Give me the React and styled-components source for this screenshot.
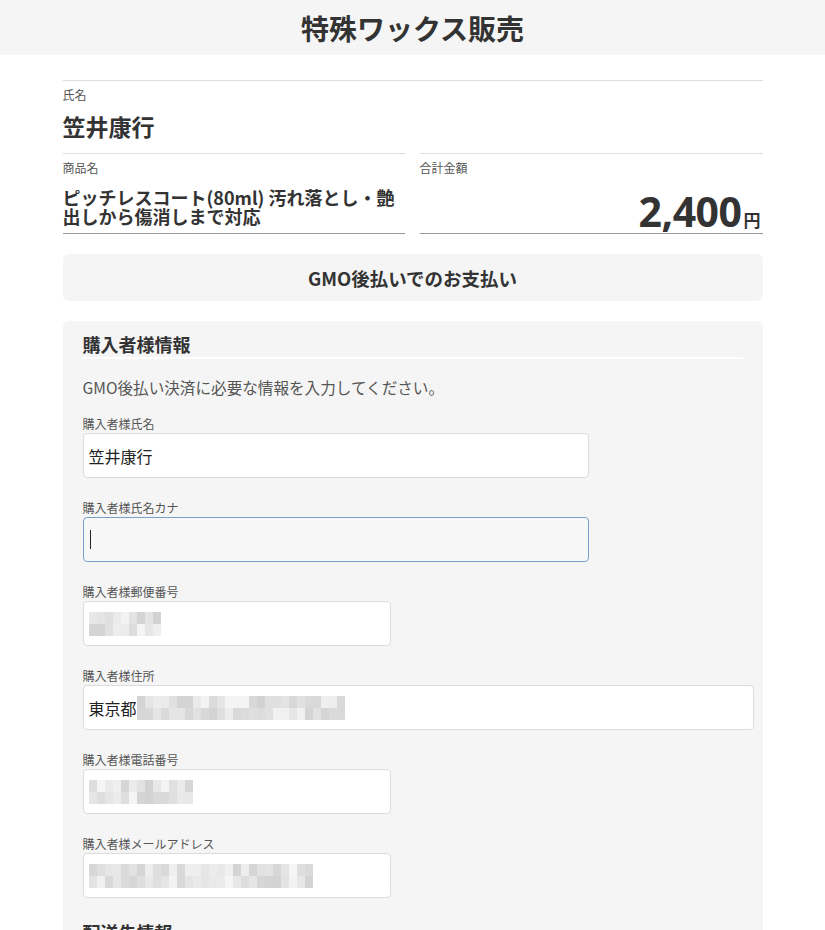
import React from 'react';
import styled, { createGlobalStyle } from 'styled-components';

const GlobalStyle = createGlobalStyle`
  body {
    margin: 0;
    background: #fff;
    color: #333;
    font-family: "Noto Sans CJK JP", "Noto Sans", sans-serif;
  }
`;

const Header = styled.header`
  height: 55px;
  background: #f5f5f5;
  display: flex;
  align-items: center;
  justify-content: center;
`;

const Title = styled.h1`
  margin: 0;
  font-size: 28px;
  font-weight: 700;
  color: #333;
`;

const Main = styled.main`
  width: 700px;
  margin: 0 auto;
  padding-top: 25px;
`;

const InfoBlock = styled.div`
  border-top: 1px solid #ddd;
  padding-top: 5px;
  display: flex;
  flex-direction: column;
`;

const InfoLabel = styled.div`
  font-size: 12px;
  line-height: 18px;
  color: #555;
`;

const BuyerName = styled.div`
  font-size: 23px;
  font-weight: 700;
  line-height: 32px;
  margin-top: 6px;
  margin-bottom: 11px;
`;

const InfoRow = styled.div`
  display: grid;
  grid-template-columns: 342px 343px;
  column-gap: 15px;
`;

const InfoCell = styled(InfoBlock)`
  border-bottom: 1px solid #999;
  padding-bottom: 7px;
`;

const ProductName = styled.div`
  font-size: 18px;
  font-weight: 700;
  line-height: 19px;
  margin-top: 11px;
`;

const Amount = styled.div`
  margin-top: auto;
  text-align: right;
  font-weight: 700;
  line-height: 1;
  margin-bottom: -6px;
`;

const AmountValue = styled.span`
  font-family: "Noto Sans", "Noto Sans CJK JP", sans-serif;
  font-size: 41px;
  letter-spacing: -0.5px;
`;

const Yen = styled.span`
  font-size: 17px;
  margin-left: 2px;
  margin-right: 2px;
`;

const MethodBox = styled.div`
  margin-top: 20px;
  height: 47px;
  border-radius: 6px;
  background: #f5f5f5;
  display: flex;
  align-items: center;
  justify-content: center;
  font-size: 18.5px;
  font-weight: 700;
`;

const FormPanel = styled.section`
  margin-top: 20px;
  background: #f5f5f5;
  border-radius: 6px;
  padding: 10px 20px 20px;
`;

const SectionTitle = styled.h2`
  margin: ${p => (p.$next ? '17px 0 0' : '0')};
  font-size: 18px;
  line-height: 26px;
  font-weight: 700;
  border-bottom: 2px solid #fff;
`;

const Lead = styled.p`
  margin: 16px 0 16px;
  font-size: 15.6px;
  line-height: 24px;
  color: #555;
`;

const FieldGroup = styled.div`
  margin-bottom: 21px;
  display: flex;
  flex-direction: column;
`;

const FieldLabel = styled.label`
  font-size: 12px;
  line-height: 18px;
  color: #555;
`;

const InputBox = styled.div`
  box-sizing: border-box;
  width: ${p => p.$width}px;
  height: 45px;
  border: 1px solid ${p => (p.$focused ? '#7b9fcb' : '#dcdcdc')};
  border-radius: 4px;
  background: ${p => (p.$focused ? '#f7f7f7' : '#fff')};
  display: flex;
  align-items: center;
  padding: 0 5px;
  font-size: 16px;
  color: #222;
`;

const Caret = styled.span`
  width: 1px;
  height: 19px;
  background: #222;
  margin-left: 1px;
`;

const Mosaic = styled.div`
  display: grid;
  grid-template-columns: repeat(${p => p.$cols}, 8px);
  grid-auto-rows: 12px;
  margin-top: 1px;
`;

const Cell = styled.span`
  display: block;
`;

const shade = (seed, i) => {
  const v = Math.abs(Math.sin(seed * 97.3 + i * 12.9898) * 43758.5453) % 1;
  const g = Math.round(210 + v * 36);
  return `rgb(${g},${g},${g})`;
};

const Blur = ({ width, seed }) => {
  const cols = Math.round(width / 8);
  const cells = Array.from({ length: cols * 2 }, (_, i) => i);
  return (
    <Mosaic $cols={cols}>
      {cells.map(i => (
        <Cell key={i} style={{ background: shade(seed, i) }} />
      ))}
    </Mosaic>
  );
};

const App = () => {
  return (
    <>
      <GlobalStyle />
      <Header>
        <Title>特殊ワックス販売</Title>
      </Header>
      <Main>
        <InfoBlock>
          <InfoLabel>氏名</InfoLabel>
          <BuyerName>笠井康行</BuyerName>
        </InfoBlock>
        <InfoRow>
          <InfoCell>
            <InfoLabel>商品名</InfoLabel>
            <ProductName>ピッチレスコート(80ml) 汚れ落とし・艶出しから傷消しまで対応</ProductName>
          </InfoCell>
          <InfoCell>
            <InfoLabel>合計金額</InfoLabel>
            <Amount>
              <AmountValue>2,400</AmountValue>
              <Yen>円</Yen>
            </Amount>
          </InfoCell>
        </InfoRow>

        <MethodBox>GMO後払いでのお支払い</MethodBox>

        <FormPanel>
          <SectionTitle>購入者様情報</SectionTitle>
          <Lead>GMO後払い決済に必要な情報を入力してください。</Lead>

          <FieldGroup>
            <FieldLabel>購入者様氏名</FieldLabel>
            <InputBox $width={506}>笠井康行</InputBox>
          </FieldGroup>

          <FieldGroup>
            <FieldLabel>購入者様氏名カナ</FieldLabel>
            <InputBox $width={506} $focused>
              <Caret />
            </InputBox>
          </FieldGroup>

          <FieldGroup>
            <FieldLabel>購入者様郵便番号</FieldLabel>
            <InputBox $width={308}>
              <Blur width={68} seed={1} />
            </InputBox>
          </FieldGroup>

          <FieldGroup>
            <FieldLabel>購入者様住所</FieldLabel>
            <InputBox $width={671}>
              東京都
              <Blur width={210} seed={2} />
            </InputBox>
          </FieldGroup>

          <FieldGroup>
            <FieldLabel>購入者様電話番号</FieldLabel>
            <InputBox $width={308}>
              <Blur width={104} seed={3} />
            </InputBox>
          </FieldGroup>

          <FieldGroup>
            <FieldLabel>購入者様メールアドレス</FieldLabel>
            <InputBox $width={308}>
              <Blur width={224} seed={4} />
            </InputBox>
          </FieldGroup>

          <SectionTitle $next>配送先情報</SectionTitle>
        </FormPanel>
      </Main>
    </>
  );
};

export default App;
